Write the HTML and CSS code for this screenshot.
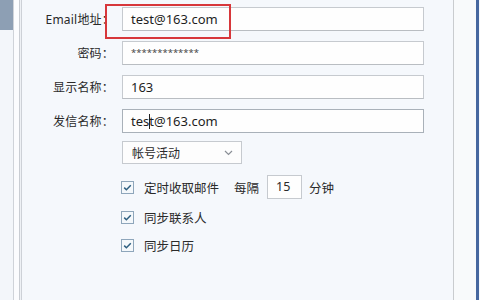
FILE: index.html
```html
<!DOCTYPE html>
<html lang="zh-CN">
<head>
<meta charset="utf-8">
<link rel="stylesheet" href="styles.css">
</head>
<body>
<div class="window">
  <div class="sidebar"><div class="sidebar-tab"></div></div>
  <div class="gutter"></div>
  <div class="gutter2"></div>
  <main class="panel">
    <div class="row">
      <span class="label">Email地址：</span>
      <div class="field">
        <div class="input">test@163.com</div>
        <div class="highlight"></div>
      </div>
    </div>
    <div class="row">
      <span class="label">密码：</span>
      <div class="input pwd">*************</div>
    </div>
    <div class="row">
      <span class="label">显示名称：</span>
      <div class="input">163</div>
    </div>
    <div class="row">
      <span class="label">发信名称：</span>
      <div class="input focus">tes<span class="caret"></span>t@163.com</div>
    </div>
    <div class="opts">
      <div class="select">
        <span>帐号活动</span>
        <svg class="chev" width="9" height="6" viewBox="0 0 9 6"><polyline points="1,1 4.5,4.5 8,1" fill="none" stroke="#8a8f96" stroke-width="1.2"/></svg>
      </div>
      <div class="check-row first">
        <span class="cb"><svg width="13" height="13" viewBox="0 0 13 13"><rect x="0.5" y="0.5" width="12" height="12" fill="#f4f8fb" stroke="#8ea6bb"/><polyline points="3.2,6.6 5.4,8.8 9.8,4.2" fill="none" stroke="#2d5f80" stroke-width="1.5"/></svg></span>
        <span class="cb-label">定时收取邮件</span>
        <span class="every">每隔</span>
        <span class="num">15</span>
        <span class="unit">分钟</span>
      </div>
      <div class="check-row">
        <span class="cb"><svg width="13" height="13" viewBox="0 0 13 13"><rect x="0.5" y="0.5" width="12" height="12" fill="#f4f8fb" stroke="#8ea6bb"/><polyline points="3.2,6.6 5.4,8.8 9.8,4.2" fill="none" stroke="#2d5f80" stroke-width="1.5"/></svg></span>
        <span class="cb-label">同步联系人</span>
      </div>
      <div class="check-row">
        <span class="cb"><svg width="13" height="13" viewBox="0 0 13 13"><rect x="0.5" y="0.5" width="12" height="12" fill="#f4f8fb" stroke="#8ea6bb"/><polyline points="3.2,6.6 5.4,8.8 9.8,4.2" fill="none" stroke="#2d5f80" stroke-width="1.5"/></svg></span>
        <span class="cb-label">同步日历</span>
      </div>
    </div>
  </main>
  <div class="right-strip"></div>
  <div class="right-border"></div>
</div>
</body>
</html>
```

FILE: styles.css
```css
html, body {
  margin: 0;
  padding: 0;
}
body {
  width: 480px;
  height: 300px;
  overflow: hidden;
  font-family: "Noto Sans", "Noto Sans CJK SC", sans-serif;
  color: #222;
  background: #f5f8fc;
}
.window {
  display: flex;
  height: 300px;
}
.sidebar {
  width: 13px;
  background: #f3f6fa;
  border-right: 1px solid #cfd3d9;
}
.sidebar-tab {
  height: 30px;
  background: #8d9fb4;
}
.gutter {
  width: 5px;
  background: #fbfcfe;
  border-right: 1px solid #c9cdd3;
}
.gutter2 {
  width: 1px;
  background: #eef1f5;
  border-right: 1px solid #cdd1d7;
}
.panel {
  width: 431px;
  padding-top: 7px;
  box-sizing: border-box;
  display: flex;
  flex-direction: column;
  background: #f5f8fc;
}
.row {
  display: flex;
  align-items: center;
  gap: 8px;
  height: 24px;
  margin-bottom: 10px;
}
.label {
  width: 92px;
  text-align: right;
  font-family: "Noto Sans", "Noto Sans CJK SC", sans-serif;
  font-size: 12px;
  color: #2a2a2a;
  letter-spacing: 0.2px;
}
.field {
  position: relative;
}
.input {
  width: 302px;
  height: 24px;
  box-sizing: border-box;
  border: 1px solid #c6cacf;
  border-bottom-color: #b9bdc2;
  background: #fefefe;
  padding-left: 8px;
  font-size: 13px;
  line-height: 22px;
  color: #1e1e1e;
  white-space: nowrap;
}
.pwd {
  font-size: 9.5px;
  letter-spacing: 0;
  color: #444;
}
.focus {
  border-color: #a9b1b9;
}
.caret {
  display: inline-block;
  width: 1px;
  height: 15px;
  background: #222;
  vertical-align: -3px;
  margin-right: -1px;
}
.highlight {
  position: absolute;
  left: -17px;
  top: -3px;
  width: 126px;
  height: 35px;
  box-sizing: border-box;
  border: 2.5px solid #d7373b;
}
.opts {
  margin-left: 100px;
  display: flex;
  flex-direction: column;
}
.select {
  width: 120px;
  height: 23px;
  box-sizing: border-box;
  margin-top: -2px;
  border: 1px solid #c6cacf;
  background: #fdfdfd;
  display: flex;
  align-items: center;
  justify-content: space-between;
  padding: 0 8px 0 9px;
  font-size: 12px;
  color: #2a2a2a;
}
.chev {
  display: block;
}
.check-row {
  display: flex;
  align-items: center;
  height: 20px;
  margin-top: 8px;
  font-size: 12.5px;
  color: #2a2a2a;
}
.check-row.first {
  height: 24px;
  margin-top: 11px;
}
.cb {
  width: 13px;
  height: 13px;
  margin-left: -1px;
  margin-right: 10px;
}
.cb svg {
  display: block;
}
.every {
  margin-left: 15px;
}
.num {
  width: 35px;
  height: 24px;
  box-sizing: border-box;
  margin-left: 8px;
  margin-right: 7px;
  border: 1px solid #c6cacf;
  background: #fefefe;
  padding-left: 8px;
  line-height: 22px;
  font-size: 12.5px;
}
.right-strip {
  width: 22px;
  background: #f8fafb;
  border-left: 1px solid #c9cccf;
}
.right-border {
  width: 3px;
  background: #46679f;
}
```
